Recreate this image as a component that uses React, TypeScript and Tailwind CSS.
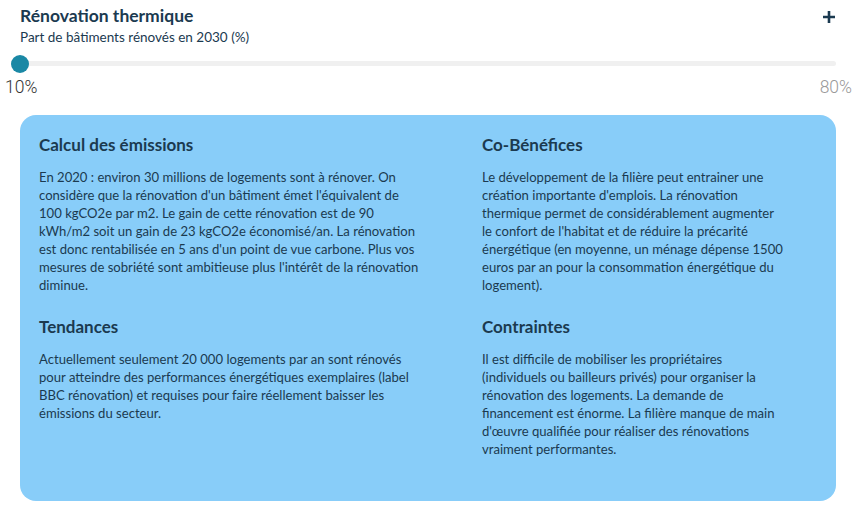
import React from "react";

const sections = [
  {
    title: "Calcul des émissions",
    lines: [
      "En 2020 : environ 30 millions de logements sont à rénover. On",
      "considère que la rénovation d'un bâtiment émet l'équivalent de",
      "100 kgCO2e par m2. Le gain de cette rénovation est de 90",
      "kWh/m2 soit un gain de 23 kgCO2e économisé/an. La rénovation",
      "est donc rentabilisée en 5 ans d'un point de vue carbone. Plus vos",
      "mesures de sobriété sont ambitieuse plus l'intérêt de la rénovation",
      "diminue.",
    ],
  },
  {
    title: "Co-Bénéfices",
    lines: [
      "Le développement de la filière peut entrainer une",
      "création importante d'emplois. La rénovation",
      "thermique permet de considérablement augmenter",
      "le confort de l'habitat et de réduire la précarité",
      "énergétique (en moyenne, un ménage dépense 1500",
      "euros par an pour la consommation énergétique du",
      "logement).",
    ],
  },
  {
    title: "Tendances",
    lines: [
      "Actuellement seulement 20 000 logements par an sont rénovés",
      "pour atteindre des performances énergétiques exemplaires (label",
      "BBC rénovation) et requises pour faire réellement baisser les",
      "émissions du secteur.",
    ],
  },
  {
    title: "Contraintes",
    lines: [
      "Il est difficile de mobiliser les propriétaires",
      "(individuels ou bailleurs privés) pour organiser la",
      "rénovation des logements. La demande de",
      "financement est énorme. La filière manque de main",
      "d'œuvre qualifiée pour réaliser des rénovations",
      "vraiment performantes.",
    ],
  },
];

export default function App() {
  return (
    <div className="w-[864px] h-[509px] bg-white overflow-hidden text-[#1b3a50]" style={{ fontFamily: "Lato, 'Noto Sans', sans-serif" }}>
      <div className="flex items-start justify-between pl-5 pr-[28px] pt-[6px]">
        <div>
          <div className="text-[17.5px] font-bold leading-5">Rénovation thermique</div>
          <div className="text-[13.5px] leading-4 mt-[3px]">Part de bâtiments rénovés en 2030 (%)</div>
        </div>
        <svg width="14" height="14" viewBox="0 0 14 14" className="mt-[4px]">
          <path d="M7 1v12M1 7h12" stroke="#1b3a50" strokeWidth="2.6" />
        </svg>
      </div>
      <div className="relative ml-5 w-[816px] mt-[16px] h-[5px] rounded-full bg-[#f0f0f0]">
        <div className="absolute -left-[9px] -top-[6.5px] w-[18px] h-[18px] rounded-full bg-[#1a88a5]" />
      </div>
      <div className="flex justify-between pl-[5px] pr-[12px] mt-[11px] text-[17.5px] leading-5" style={{ fontFamily: "Roboto, 'Liberation Sans', sans-serif", fontWeight: 300 }}>
        <span className="text-[#333]">10%</span>
        <span className="text-[#999]">80%</span>
      </div>
      <div className="ml-5 w-[816px] mt-[18px] h-[386px] rounded-[16px] bg-[#88cdf9] pl-[19px] pt-[20px]">
        <div className="grid grid-cols-[403px_320px] gap-x-[40px] gap-y-[23px]">
          {sections.map((s) => (
            <div key={s.title}>
              <div className="text-[17px] font-bold leading-5">{s.title}</div>
              <p className="mt-[13px] text-[13.1px] leading-[18px]">
                {s.lines.map((l, i) => (
                  <span key={i} className="block whitespace-nowrap">{l}</span>
                ))}
              </p>
            </div>
          ))}
        </div>
      </div>
    </div>
  );
}
